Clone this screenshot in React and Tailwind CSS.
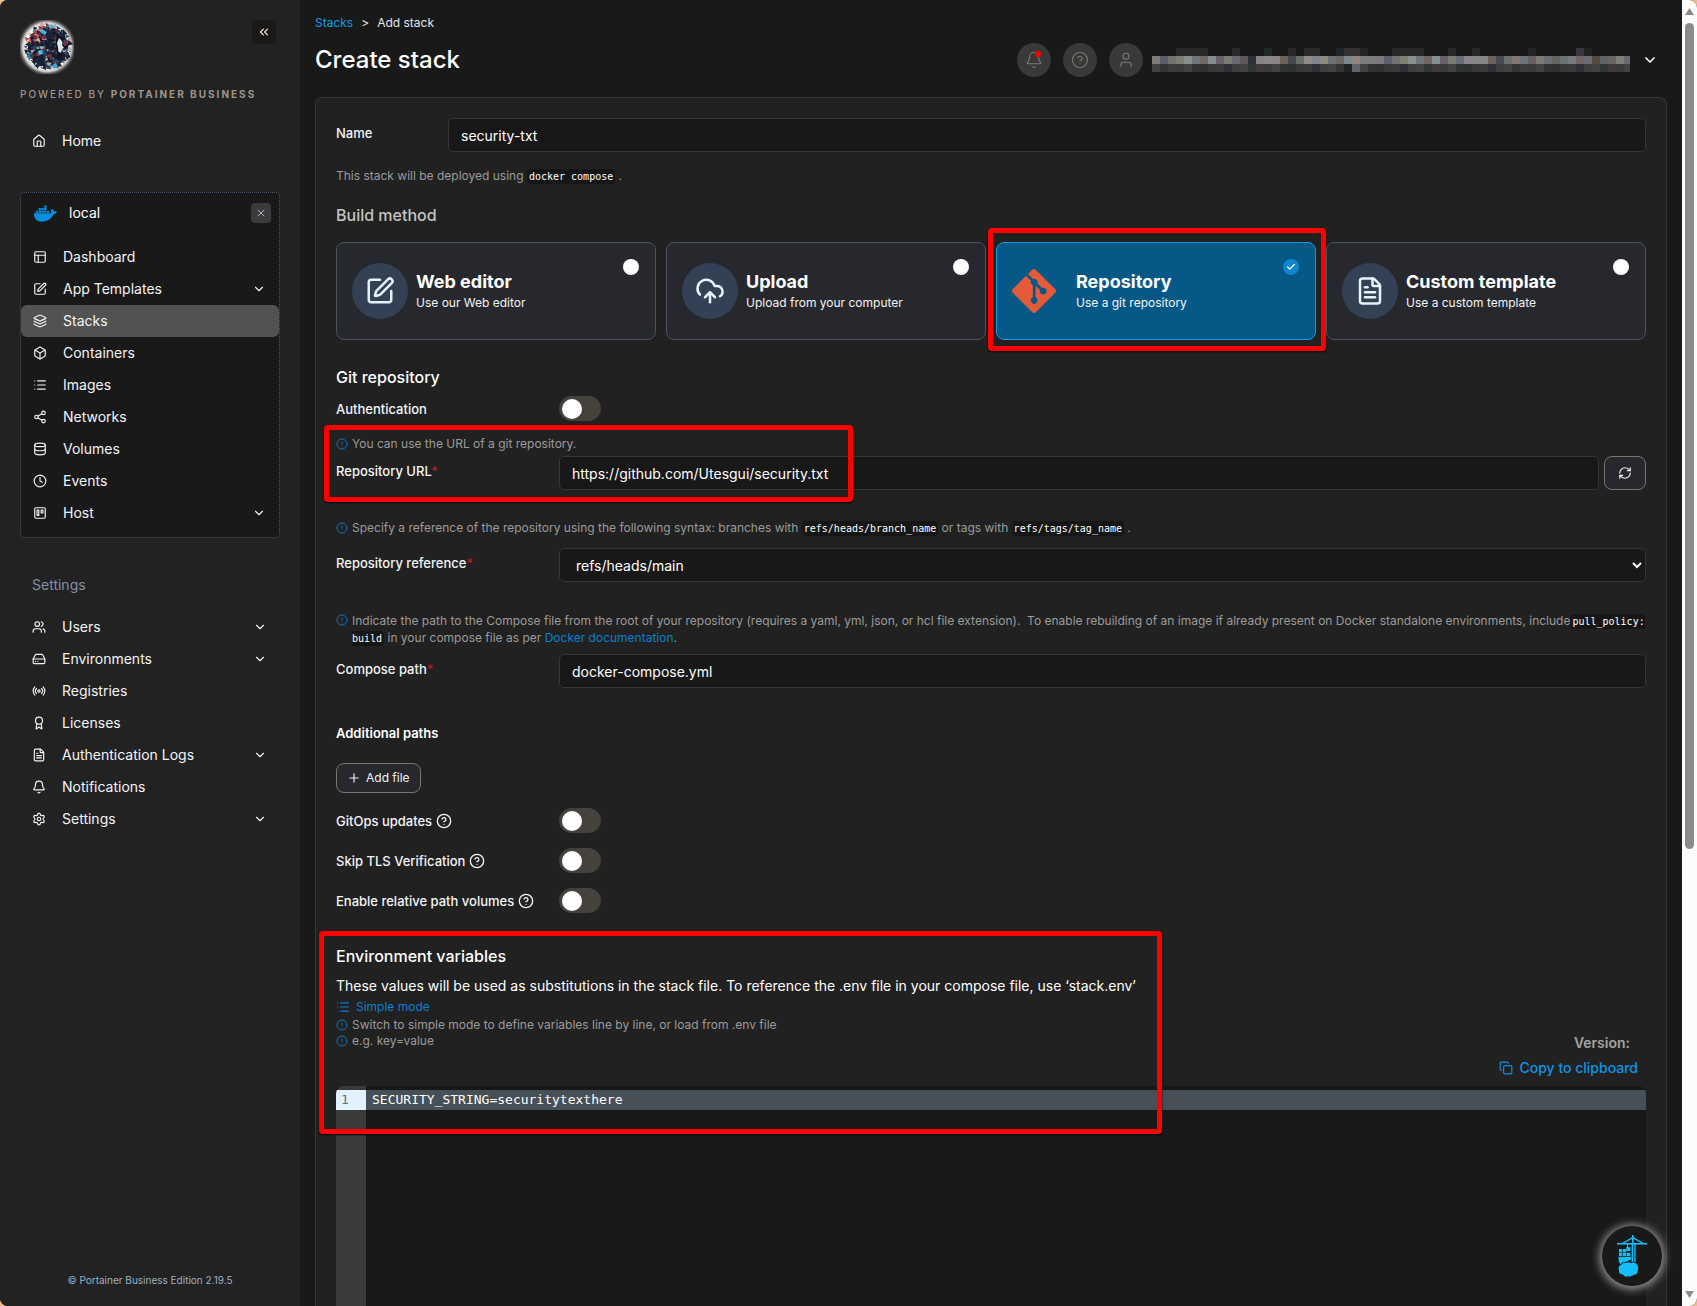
import {
  Bell, Box, ChevronDown, ChevronsLeft, CircleAlert, CircleHelp, Clock, CloudUpload, Copy, Database,
  FileText, HardDrive, House, Layers, List, Award, PanelsTopLeft, Plus, Radio, RefreshCw, Settings,
  Share2, SquarePen, User, Users, X, Check,
} from "lucide-react";
import { FaDocker, FaGitAlt } from "react-icons/fa";

function BoardIcon({ size, strokeWidth }) {
  return (
    <svg width={size} height={size} viewBox="0 0 24 24" fill="none" stroke="currentColor" strokeWidth={strokeWidth} strokeLinecap="round" strokeLinejoin="round">
      <rect x="3" y="3" width="18" height="18" rx="2" />
      <rect x="7" y="7" width="3" height="9" />
      <rect x="14" y="7" width="3" height="5" />
    </svg>
  );
}

/* Circular badge: a head in profile made of dark and coloured shards on a soft white glow. */
function BrandLogo() {
  const tones = ["#1b2438", "#1d2c44", "#16181f", "#5e2c3a", "#2f7391", "#20283a", "#141a28", "#2a5672", "#7d3640", "#141a28", "#9fb0bd", "#31405a", "#181d2b"];
  const reds = ["#b04a4c", "#d0706a", "#7c2f3c", "#e0a29a"];
  const shards = [];
  for (let i = 0; i < 230; i++) {
    const a = i * 2.39996;
    const r = 1.5 * Math.sqrt(i);
    const x = 28 + r * Math.cos(a);
    const y = 27 + r * Math.sin(a);
    const reddish = x < 24 && y < 24 && i % 3 !== 0;
    const s = 1 + ((i * 7) % 5) * 0.5;
    shards.push(
      <polygon
        key={i}
        points={`${x},${y - s} ${x + s},${y + s * 0.4} ${x - s * 0.7},${y + s}`}
        fill={reddish ? reds[i % reds.length] : tones[(i * 5 + (i % 7)) % tones.length]}
        transform={`rotate(${(i * 47) % 360} ${x} ${y})`}
      />
    );
  }
  return (
    <svg width="54" height="54" viewBox="0 0 54 54" aria-label="Logo" role="img">
      <defs>
        <radialGradient id="halo">
          <stop offset="0.72" stopColor="#ffffff" />
          <stop offset="0.82" stopColor="#c8c8c8" />
          <stop offset="1" stopColor="#222222" stopOpacity="0" />
        </radialGradient>
      </defs>
      <circle cx="27" cy="27" r="30" fill="url(#halo)" />
      <circle cx="28" cy="27" r="20" fill="#161c2a" />
      {shards}
      <path d="M37 13c4 2 6 7 5 10l3 4-3 2 1 4c-1 4-4 6-6 7 2-7 0-10-1-14-1-5 1-9 1-13z" fill="#10131c" />
      <path d="M39 18c3 2 4 5 3 7l2 3-2 1-1 4-3-2c1-3-1-6-1-8z" fill="#dfe7ea" />
      <path d="M22 9l5 3-2 3-5-3z" fill="#49b8d8" />
      <path d="M29 5l3-1 1 4-3 1z" fill="#49b8d8" />
      <path d="M32 45l4-2 2 4-4 2z" fill="#35a9cc" />
      <path d="M18 31l4-1 1 4-4 1z" fill="#4bbfe0" />
    </svg>
  );
}

const mosaicMain = ["#827b7b", "#5a606b", "#717472", "#7b8070", "#86908a", "#70747c", "#716766", "#828b8e", "#6a606f", "#7b7c74", "#696a74", "#625757", "#2c3239", "#888282", "#8a8686", "#868484", "#6f625b", "#47484b", "#69706a", "#918b86", "#80838f", "#8f897f", "#6c7173", "#6c6864", "#7c878c", "#93837e", "#7c7c7c", "#7c7c7c", "#7e7a7c", "#5b606c", "#717271", "#7d816f", "#87908a", "#70747f", "#716663", "#829092", "#6a606f", "#7a7b73", "#696b78", "#868484", "#868484", "#868484", "#6f615b", "#494a4f", "#69706d", "#857776", "#69777a", "#6a5e65", "#7d7a7a", "#6b6f73", "#65645e", "#6c7376", "#777b7c", "#716563", "#696b75", "#564c3a", "#616466", "#6b6560", "#7d7f78", "#6a6872"];
const mosaicTop = { 3: "#282828", 4: "#282828", 5: "#282828", 6: "#292929", 10: "#2a2a2a", 14: "#222727", 17: "#282a29", 19: "#2a2a2b", 20: "#2a2a2b", 23: "#20272b", 24: "#353231", 25: "#353231", 26: "#272523", 30: "#282828", 31: "#282a25", 32: "#282828", 33: "#282828", 37: "#292929", 40: "#292929", 47: "#252525", 53: "#35393f", 54: "#242220" };
const mosaicLow = ["#434343", "#424242", "#3a3a3a", "#343635", "#313436", "#2d3034", "#403c3c", "#2f3030", "#3f3e3f", "#3a3a3a", "#393939"];

function RedactedName() {
  return (
    <svg className="h-6 w-[478px]" viewBox="0 0 478 24" shapeRendering="crispEdges" aria-hidden="true">
      {mosaicMain.map((c, i) => (
        <g key={i}>
          {mosaicTop[i] && <rect x={i * 8} y="0" width="8" height="8" fill={mosaicTop[i]} />}
          <rect x={i * 8} y="8" width="8" height="8" fill={c} />
          <rect x={i * 8} y="16" width="8" height="8" fill={i === 25 ? "#60666a" : i === 24 ? "#212323" : mosaicLow[(i * 3) % 11]} />
        </g>
      ))}
    </svg>
  );
}

function CraneLogo() {
  return (
    <svg width="32" height="42" viewBox="0 0 32 42" fill="#13bef9" aria-hidden="true">
      <path d="M1 8h30v1.6H1z" />
      <path d="M16 0h1.6v9H16z" />
      <path d="M16.4 2 5 8.4h2.6l9.2-5 9.2 5h2.8L17.2 2z" />
      <path d="M15.6 9h1.4v18h-1.4zM18.2 9h1.4v18h-1.4z" />
      <path d="M11 9h1v3h2.4v4h-4v-4H11z" />
      <path d="M3 14h3.4v3.2H3zM7 14h3.4v3.2H7zM3 17.8h3.4V21H3zM7 17.8h3.4V21H7zM11 17.8h3.4V21H11z" />
      <path d="M2.6 21.8H15v3c-1.6.2-3 .8-4 2-2.400-.4-5 .4-6.600 2.600C3 28 2.400 25.600 2.600 21.800z" />
      <path d="M10.600 28c1.300-1.300 3.500-1 4.600.2 1.600-1.400 5-1 5.800 1.400 1.600 1.800 1.600 4.400.6 6 .4 2.600-1.600 4.600-4 4.200-1.400 1.400-3.600 2.200-5.400 1.400-2 1-4.400.2-5.400-1.600-2.600-.2-4.400-2-3.800-4.600-1.200-2 .2-4.600 2.200-5.200 1-1.800 3.400-2.600 5.400-1.800z" />
    </svg>
  );
}

function NavItem({ icon: Icon, label, chevron, active }) {
  return (
    <li>
      <a
        href="#"
        className={
          active
            ? "flex h-8 items-center gap-4 rounded-md bg-[#525252] px-3 text-sm text-gray-100"
            : "flex h-8 items-center gap-4 rounded-md px-3 text-sm text-gray-100"
        }
      >
        <Icon size={14} strokeWidth={2} />
        <span className="flex-1">{label}</span>
        {chevron && <ChevronDown size={14} className="mr-px" />}
      </a>
    </li>
  );
}

const envItems = [
  { icon: PanelsTopLeft, label: "Dashboard" },
  { icon: SquarePen, label: "App Templates", chevron: true },
  { icon: Layers, label: "Stacks", active: true },
  { icon: Box, label: "Containers" },
  { icon: List, label: "Images" },
  { icon: Share2, label: "Networks" },
  { icon: Database, label: "Volumes" },
  { icon: Clock, label: "Events" },
  { icon: BoardIcon, label: "Host", chevron: true },
];

const settingsItems = [
  { icon: Users, label: "Users", chevron: true },
  { icon: HardDrive, label: "Environments", chevron: true },
  { icon: Radio, label: "Registries" },
  { icon: Award, label: "Licenses" },
  { icon: FileText, label: "Authentication Logs", chevron: true },
  { icon: Bell, label: "Notifications" },
  { icon: Settings, label: "Settings", chevron: true },
];

function Sidebar() {
  return (
    <aside className="flex w-[300px] shrink-0 flex-col bg-[#222222] px-5 pt-5">
      <div className="flex items-start justify-between pr-1">
        <BrandLogo />
        <button aria-label="Collapse sidebar" className="flex size-6 items-center justify-center rounded bg-[#1c1816] text-gray-200">
          <ChevronsLeft size={14} />
        </button>
      </div>
      <div className="mt-3 whitespace-nowrap text-[10px] font-medium leading-4 tracking-[2px] text-[#9c958d]">
        POWERED BY <span className="font-bold">PORTAINER BUSINESS</span>
      </div>
      <nav className="mt-[23px]">
        <ul>
          <NavItem icon={House} label="Home" />
        </ul>
        <div className="mt-[35px] rounded border border-dotted border-[#49566a] bg-[#191919] pb-2">
          <div className="flex h-10 items-center pl-[13px] pr-2">
            <FaDocker size={23} color="#0a8fe0" />
            <span className="ml-3 flex-1 text-sm text-white">local</span>
            <button aria-label="Close environment" className="flex size-5 items-center justify-center rounded bg-[#3b3b3b] text-[#a9b4c8]">
              <X size={12} />
            </button>
          </div>
          <ul className="mt-2">
            {envItems.map((item) => (
              <NavItem key={item.label} {...item} />
            ))}
          </ul>
        </div>
        <h2 className="mt-[37px] pl-3 text-sm leading-5 text-[#8291a3]">Settings</h2>
        <ul className="mt-4">
          {settingsItems.map((item) => (
            <NavItem key={item.label} {...item} />
          ))}
        </ul>
      </nav>
      <footer className="mt-auto pb-[18px] text-center text-[10px] leading-4 text-[#9fb0c2]">© Portainer Business Edition 2.19.5</footer>
    </aside>
  );
}

function Header() {
  return (
    <header>
      <div className="flex gap-2 text-xs leading-4 text-gray-200">
        <a href="#" className="text-[#0e9be9]">Stacks</a>
        <span>&gt;</span>
        <span>Add stack</span>
      </div>
      <div className="mt-[10px] flex items-center justify-between pr-[9px]">
        <h1 className="text-2xl font-medium leading-[38px] text-white">Create stack</h1>
        <div className="flex items-center gap-3 text-[#7f7872]">
          <button aria-label="Notifications" className="relative flex size-[34px] items-center justify-center rounded-full bg-[#393939]">
            <Bell size={18} strokeWidth={1.5} />
            <span className="absolute right-[10px] top-2 size-[6px] rounded-full bg-[#ff0000]" />
          </button>
          <button aria-label="Help" className="flex size-[34px] items-center justify-center rounded-full bg-[#393939]">
            <CircleHelp size={18} strokeWidth={1.5} />
          </button>
          <button aria-label="User menu" className="flex items-center">
            <span className="flex size-[34px] items-center justify-center rounded-full bg-[#393939]">
              <User size={18} strokeWidth={1.5} />
            </span>
            <span className="ml-[9px] mr-3"><RedactedName /></span>
            <ChevronDown size={16} strokeWidth={2.5} className="text-white" />
          </button>
        </div>
      </div>
    </header>
  );
}

function Highlight({ className }) {
  return <div aria-hidden="true" className={`pointer-events-none absolute rounded-[4px] border-[5px] border-[#ff0000] shadow-[0_1px_2px_#000] ${className}`} />;
}

function Code({ children }) {
  return <code className="rounded bg-[#161616] px-[2px] py-[2px] font-['DejaVu_Sans_Mono',monospace] text-[10px] leading-none text-white">{children}</code>;
}

function Info({ children, className }) {
  return (
    <p className={`flex gap-1 text-xs text-[#9b9b9b] ${className}`}>
      <CircleAlert size={12} className="mt-[2px] shrink-0 text-[#0b76b3]" />
      <span>{children}</span>
    </p>
  );
}

const fieldClass = "h-[34px] w-full min-w-0 rounded-[5px] border border-[#363636] bg-[#181818] text-sm text-white outline-none";

function FieldRow({ id, label, required, children }) {
  return (
    <div className="flex items-start">
      <label htmlFor={id} className="w-[223px] shrink-0 pt-[7px] text-[13px] font-medium leading-4 text-gray-100">
        {label}
        {required && <span className="text-[#a82424]">*</span>}
      </label>
      {children}
    </div>
  );
}

function ToggleRow({ id, label, help }) {
  return (
    <div className="flex h-[25px] items-center">
      <label htmlFor={id} className="flex w-[223px] shrink-0 items-center gap-1 text-[13px] font-medium leading-4 text-gray-100">
        {label}
        {help && <CircleHelp size={16} />}
      </label>
      <input
        id={id}
        type="checkbox"
        role="switch"
        className="flex h-[25px] w-[42px] appearance-none items-center rounded-full bg-[#45413c] px-[3px] before:size-5 before:rounded-full before:bg-white"
      />
    </div>
  );
}

function BuildOption({ icon: Icon, title, text, checked, children }) {
  return (
    <div className="relative">
      <label
        className={
          checked
            ? "flex h-[98px] items-center gap-5 rounded-lg border border-[#1398e4] bg-[#065986] px-[15px]"
            : "flex h-[98px] items-center gap-2 rounded-lg border border-[#4a535f] bg-[#27282d] px-[15px]"
        }
      >
        {checked ? (
          <FaGitAlt size={50} color="#e35b38" className="-mx-[3px]" />
        ) : (
          <span className="flex size-14 items-center justify-center rounded-full bg-[#344054] text-[#e6f3fd]">
            <Icon size={30} />
          </span>
        )}
        <span>
          <span className="block text-lg font-bold leading-6 text-white">{title}</span>
          <span className="block text-xs leading-[18px] text-gray-100">{text}</span>
        </span>
        <input
          type="radio"
          name="method"
          defaultChecked={checked}
          className="absolute right-[17px] top-[17px] size-4 appearance-none rounded-full bg-white checked:bg-[#0e86cf]"
        />
        {checked && <Check size={10} strokeWidth={3} className="absolute right-5 top-5 text-white" />}
      </label>
      {children}
    </div>
  );
}

function StackForm() {
  return (
    <form className="mt-[18px] flex-1 rounded-t-lg border border-b-0 border-[#363636] bg-[#212121] px-5 pt-5">
      <div className="flex items-start">
        <label htmlFor="name" className="w-28 shrink-0 pt-[7px] text-[13px] font-medium leading-4 text-gray-100">Name</label>
        <input id="name" defaultValue="security-txt" className={`${fieldClass} px-3`} />
      </div>
      <p className="mt-4 text-xs leading-4 text-[#9b9b9b]">
        This stack will be deployed using <Code>docker compose</Code> .
      </p>
      <h2 className="mt-5 text-base font-medium leading-[22px] text-[#c4c4c4]">Build method</h2>
      <div className="mt-4 grid grid-cols-4 gap-[10px]">
        <BuildOption icon={SquarePen} title="Web editor" text="Use our Web editor" />
        <BuildOption icon={CloudUpload} title="Upload" text="Upload from your computer" />
        <BuildOption title="Repository" text="Use a git repository" checked>
          <Highlight className="-bottom-[11px] -left-2 -right-[10px] -top-[14px]" />
        </BuildOption>
        <BuildOption icon={FileText} title="Custom template" text="Use a custom template" />
      </div>

      <h2 className="mt-[26px] text-base font-medium leading-[22px] text-white">Git repository</h2>
      <div className="mt-2"><ToggleRow id="auth" label="Authentication" /></div>

      <div className="relative mt-[15px]">
        <Info className="mb-1 leading-4">You can use the URL of a git repository.</Info>
        <FieldRow id="url" label="Repository URL" required>
          <input id="url" defaultValue="https://github.com/Utesgui/security.txt" className={`${fieldClass} px-3`} />
          <button type="button" aria-label="Refresh" className="ml-[5px] flex h-[34px] w-[42px] shrink-0 items-center justify-center rounded-lg border border-[#7c746e] bg-[#27282d] text-gray-100">
            <RefreshCw size={14} />
          </button>
        </FieldRow>
        <Highlight className="-bottom-3 -left-3 -top-[11px] w-[529px]" />
      </div>

      <Info className="mb-3 mt-[30px] leading-4">
        Specify a reference of the repository using the following syntax: branches with <Code>refs/heads/branch_name</Code> or tags with <Code>refs/tags/tag_name</Code> .
      </Info>
      <FieldRow id="ref" label="Repository reference" required>
        <select id="ref" className={`${fieldClass} pl-3`}>
          <option>refs/heads/main</option>
        </select>
      </FieldRow>

      <Info className="mb-2 mt-[30px] leading-[17px]">
        Indicate the path to the Compose file from the root of your repository (requires a yaml, yml, json, or hcl file extension). &nbsp;To enable rebuilding of an image if already present on Docker standalone environments, include<Code>pull_policy: build</Code> in your compose file as per <a href="#" className="text-[#0b7fd0]">Docker documentation</a>.
      </Info>
      <FieldRow id="path" label="Compose path" required>
        <input id="path" defaultValue="docker-compose.yml" className={`${fieldClass} px-3`} />
      </FieldRow>

      <h3 className="mt-[35px] text-[13px] font-semibold leading-5 text-white">Additional paths</h3>
      <button type="button" className="mt-5 flex h-[30px] items-center gap-[5px] rounded-lg border border-[#7c746e] bg-[#27282d] px-[10px] text-xs text-gray-100">
        <Plus size={14} /> Add file
      </button>
      <div className="mt-[15px] flex flex-col gap-[15px]">
        <ToggleRow id="gitops" label="GitOps updates" help />
        <ToggleRow id="tls" label="Skip TLS Verification" help />
        <ToggleRow id="relative" label="Enable relative path volumes" help />
      </div>

      <div className="relative mt-8">
        <h2 className="text-base font-medium leading-[22px] text-white">Environment variables</h2>
        <div className="mt-[9px] flex justify-between">
          <div className="h-[102px]">
            <p className="text-sm leading-5 text-white">These values will be used as substitutions in the stack file. To reference the .env file in your compose file, use ‘stack.env’</p>
            <button type="button" className="flex items-center gap-[6px] text-xs leading-[21px] text-[#0b7fd0]">
              <List size={14} /> Simple mode
            </button>
            <Info className="leading-4">Switch to simple mode to define variables line by line, or load from .env file</Info>
            <Info className="leading-4">e.g. key=value</Info>
          </div>
          <div className="flex shrink-0 flex-col items-end gap-[5px] self-end pr-2">
            <span className="pr-2 text-sm font-semibold leading-5 text-[#a3a3a3]">Version:</span>
            <button type="button" className="flex items-center gap-[6px] text-sm font-medium leading-5 text-[#0e93e4]">
              <Copy size={14} /> Copy to clipboard
            </button>
          </div>
        </div>
        <Highlight className="-left-[17px] -top-[14px] h-[203px] w-[843px]" />
      </div>

      <div className="mt-2 flex h-[400px] overflow-hidden rounded-lg bg-[#181818] pb-1 font-['DejaVu_Sans_Mono',monospace] text-[13px] leading-5">
        <div className="w-[30px] shrink-0 bg-[#3a3a3a] pt-1">
          <div className="bg-[#e0f2fe] pl-[5px] text-[#6c6c6c]">1</div>
        </div>
        <textarea
          aria-label="Environment variables"
          spellCheck={false}
          defaultValue="SECURITY_STRING=securitytexthere"
          className="mt-1 flex-1 resize-none bg-linear-to-b from-[#475056] from-[20px] to-transparent to-[20px] px-[6px] text-white outline-none"
        />
      </div>
    </form>
  );
}

function ScrollTrack() {
  return (
    <div aria-hidden="true" className="flex w-[15px] shrink-0 flex-col items-center bg-[#fcfcfc] py-2 text-[#8b8b8b]">
      <svg width="9" height="7" viewBox="0 0 9 7" fill="currentColor"><path d="M4.500 0 9 7H0z" /></svg>
      <div className="mt-2 h-[64%] w-[9px] rounded-full bg-[#8b8b8b]" />
      <svg width="9" height="7" viewBox="0 0 9 7" fill="currentColor" className="mt-auto"><path d="M0 0h9L4.500 7z" /></svg>
    </div>
  );
}

export default function App() {
  return (
    <div className="h-screen bg-[#eebb8c] font-[Inter,sans-serif]">
      <div className="flex h-full overflow-hidden rounded-lg bg-[#191919]">
        <Sidebar />
        <main className="flex min-w-0 flex-1 flex-col pl-[15px] pr-[15px] pt-[15px]">
          <Header />
          <StackForm />
        </main>
        <ScrollTrack />
      </div>
      <button
        aria-label="Portainer assistant"
        className="fixed bottom-5 right-[35px] flex size-[60px] items-center justify-center rounded-full bg-[#191919] shadow-[0_1px_10px_2px_#a0a0a0]"
      >
        <CraneLogo />
      </button>
    </div>
  );
}
